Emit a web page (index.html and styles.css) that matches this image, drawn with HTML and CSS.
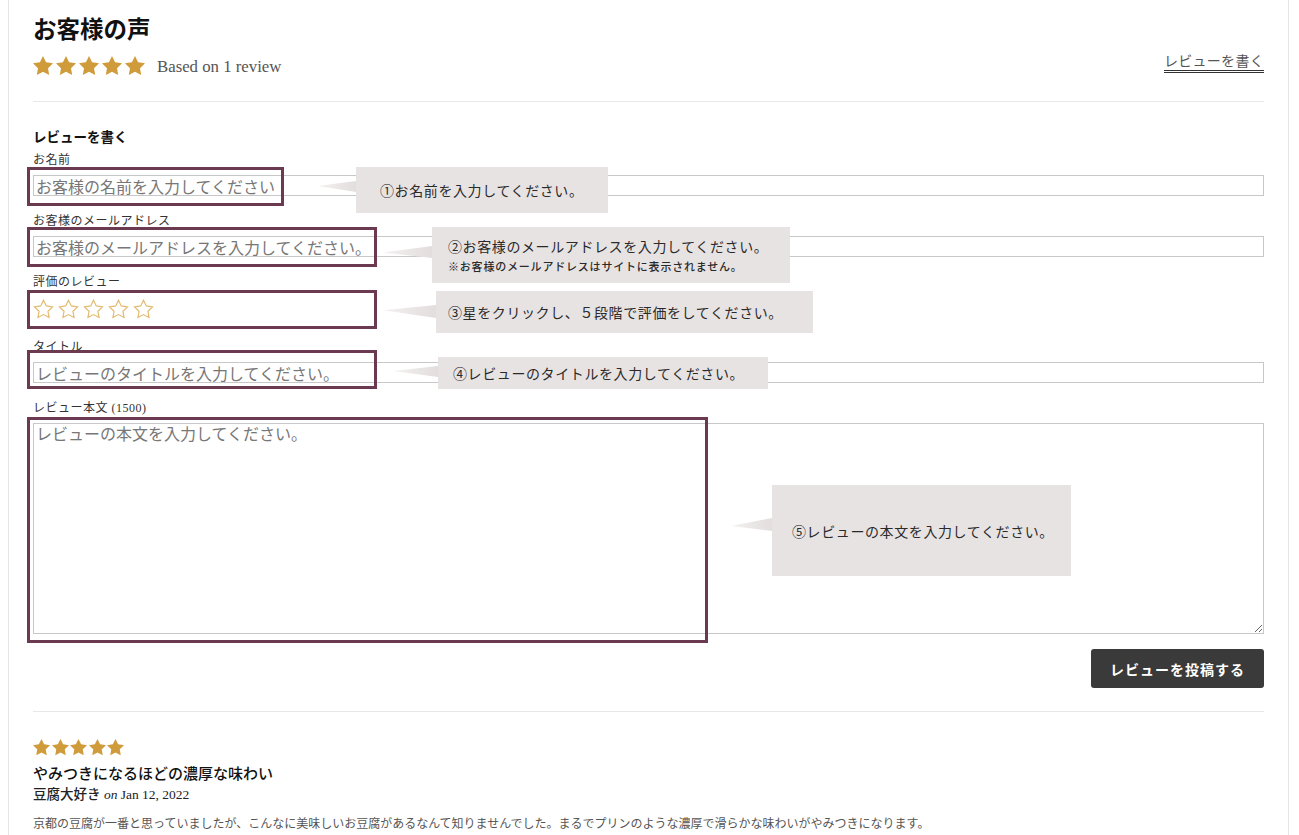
FILE: index.html
```html
<!DOCTYPE html>
<html lang="ja">
<head>
  <meta charset="utf-8">
  <title>お客様の声</title>
  <link rel="stylesheet" href="styles.css">
</head>
<body>
    <svg class="icon-defs" width="0" height="0">
        <defs>
            <symbol id="star" viewBox="2 2 20 20">
                <path d="M12 2l3.09 6.26L22 9.27l-5 4.87 1.18 6.88L12 17.77l-6.18 3.25L7 14.14 2 9.27l6.91-1.01L12 2z"/>
            </symbol>
            <symbol id="star-o" viewBox="1.4 1.4 21.2 21.2">
                <path d="M12 2.6l2.8 5.8 6.3.9-4.6 4.5 1.1 6.3L12 17.1l-5.6 3 1.1-6.3-4.6-4.5 6.3-.9L12 2.6z" fill="none" stroke="currentColor" stroke-width="1.2"/>
            </symbol>
        </defs>
    </svg>

    <div class="card">
        <h2 class="title">お客様の声</h2>
        <div class="summary">
            <div class="summary-left">
                <span class="stars stars-lg">
                    <svg><use href="#star"/></svg>
                    <svg><use href="#star"/></svg>
                    <svg><use href="#star"/></svg>
                    <svg><use href="#star"/></svg>
                    <svg><use href="#star"/></svg>
                </span>
                <span class="summary-text">Based on 1 review</span>
            </div>
            <a class="write-link" href="#">レビューを書く</a>
        </div>

        <hr class="divider">

        <form class="review-form">
            <h3 class="form-title">レビューを書く</h3>

            <div class="field">
                <label>お名前</label>
                <input type="text" placeholder="お客様の名前を入力してください">
                <div class="mark mark-1"></div>
                <div class="note note-1"><p>①お名前を入力してください。</p></div>
            </div>

            <div class="field">
                <label>お客様のメールアドレス</label>
                <input type="text" placeholder="お客様のメールアドレスを入力してください。">
                <div class="mark mark-2"></div>
                <div class="note note-2">
                    <p>②お客様のメールアドレスを入力してください。</p>
                    <p class="note-small">※お客様のメールアドレスはサイトに表示されません。</p>
                </div>
            </div>

            <div class="field">
                <label>評価のレビュー</label>
                <div class="stars stars-empty">
                    <svg><use href="#star-o"/></svg>
                    <svg><use href="#star-o"/></svg>
                    <svg><use href="#star-o"/></svg>
                    <svg><use href="#star-o"/></svg>
                    <svg><use href="#star-o"/></svg>
                </div>
                <div class="mark mark-3"></div>
                <div class="note note-3"><p>③星をクリックし、５段階で評価をしてください。</p></div>
            </div>

            <div class="field">
                <label>タイトル</label>
                <input type="text" placeholder="レビューのタイトルを入力してください。">
                <div class="mark mark-4"></div>
                <div class="note note-4"><p>④レビューのタイトルを入力してください。</p></div>
            </div>

            <div class="field field-last">
                <label>レビュー本文 (1500)</label>
                <textarea placeholder="レビューの本文を入力してください。"></textarea>
                <div class="mark mark-5"></div>
                <div class="note note-5"><p>⑤レビューの本文を入力してください。</p></div>
            </div>

            <div class="form-actions">
                <button type="button" class="submit">レビューを投稿する</button>
            </div>
        </form>

        <hr class="divider divider-bottom">

        <div class="review">
            <span class="stars stars-sm">
                <svg><use href="#star"/></svg>
                <svg><use href="#star"/></svg>
                <svg><use href="#star"/></svg>
                <svg><use href="#star"/></svg>
                <svg><use href="#star"/></svg>
            </span>
            <h4 class="review-title">やみつきになるほどの濃厚な味わい</h4>
            <p class="review-author">豆腐大好き <em>on</em> Jan 12, 2022</p>
            <p class="review-body">京都の豆腐が一番と思っていましたが、こんなに美味しいお豆腐があるなんて知りませんでした。まるでプリンのような濃厚で滑らかな味わいがやみつきになります。</p>
        </div>
    </div>
</body>
</html>
```

FILE: styles.css
```css
/* Page */
body {
    margin: 0;
    font-family: "Liberation Serif", "Noto Sans CJK JP", serif;
    color: #222;
    background-color: #fff;
}

.icon-defs {
    position: absolute;
    width: 0;
    height: 0;
}

.card {
    box-sizing: border-box;
    width: 1281px;
    margin-left: 8px;
    padding: 15px 24px 40px;
    border-left: 1px solid #e6e6e6;
    border-right: 1px solid #e6e6e6;
}

/* Header */
.title {
    margin: 0;
    font-size: 23.5px;
    line-height: 30px;
    font-weight: 700;
    color: #111;
}

.summary {
    display: flex;
    justify-content: space-between;
    align-items: flex-start;
    height: 24px;
    margin-top: 9px;
}

.summary-left {
    display: flex;
    align-items: center;
    height: 24px;
}

.summary-text {
    margin-left: 12px;
    padding-top: 2px;
    font-size: 16.8px;
    color: #555;
}

.write-link {
    margin-top: 0;
    font-size: 14px;
    line-height: 16px;
    color: #555;
    text-decoration: none;
    border-bottom: 3px double #333;
    letter-spacing: 0.3px;
}

/* Stars */
.stars {
    display: flex;
    align-items: center;
}

.stars svg {
    display: block;
    fill: currentColor;
}

.stars-lg {
    gap: 3px;
    color: #cf9b3b;
}

.stars-lg svg {
    width: 20px;
    height: 20px;
}

.stars-empty {
    gap: 4px;
    height: 25px;
    color: #e3bb70;
}

.stars-empty svg {
    width: 21px;
    height: 21px;
}

.stars-sm {
    gap: 1.6px;
    height: 18px;
    color: #cf9b3b;
}

.stars-sm svg {
    width: 17px;
    height: 17px;
}

.divider {
    margin: 23px 0 0;
    border: 0;
    border-top: 1px solid #e8e8e8;
}

.divider-bottom {
    margin-top: 23px;
}

/* Form */
.review-form {
    margin-top: 26px;
}

.form-title {
    margin: 0 0 4px;
    font-size: 13.5px;
    line-height: 20px;
    font-weight: 700;
    color: #111;
}

.field {
    position: relative;
    margin-bottom: 17px;
}

.field label {
    display: block;
    margin-bottom: 7px;
    font-size: 12px;
    line-height: 16px;
    letter-spacing: 0.5px;
    color: #333;
}

.field input,
.field textarea {
    display: block;
    box-sizing: border-box;
    width: 100%;
    margin: 0;
    padding: 0 2px;
    border: 1px solid #c8c8c8;
    border-radius: 0;
    font-family: "Noto Sans CJK JP", sans-serif;
    font-size: 16px;
    color: #333;
    background-color: #fff;
}

.field input {
    height: 21px;
    line-height: 19px;
}

.field textarea {
    height: 211px;
    padding-top: 0;
    line-height: 18px;
    resize: vertical;
}

.field input::placeholder,
.field textarea::placeholder {
    color: #777;
}

.field-last {
    margin-bottom: 15px;
}

.form-actions {
    display: flex;
    justify-content: flex-end;
}

.submit {
    width: 173px;
    height: 39px;
    padding: 0;
    border: none;
    border-radius: 3px;
    background-color: #3a3a3a;
    color: #fff;
    font-family: "Noto Sans CJK JP", sans-serif;
    font-size: 14px;
    font-weight: 700;
    letter-spacing: 1px;
    cursor: pointer;
}

/* Annotation frames */
.mark {
    position: absolute;
    left: -6px;
    box-sizing: border-box;
    border: 3px solid #6b3a50;
    pointer-events: none;
}

.mark-1 { top: 15px; width: 257px; height: 39px; }
.mark-2 { top: 14px; width: 350px; height: 40px; }
.mark-3 { top: 16px; width: 350px; height: 39px; }
.mark-4 { top: 11px; width: 350px; height: 39px; }
.mark-5 { top: 17px; width: 681px; height: 226px; }

/* Annotation callouts */
.note {
    position: absolute;
    box-sizing: border-box;
    display: flex;
    flex-direction: column;
    justify-content: center;
    background-color: #e8e3e3;
    font-family: "Noto Sans CJK JP", sans-serif;
    font-size: 14px;
    color: #2a2a2a;
    letter-spacing: 0.6px;
    white-space: nowrap;
}

.note p {
    margin: 0;
    line-height: 20px;
}

.note::before {
    content: "";
    position: absolute;
    background: linear-gradient(to right, #f4f1f1, #e3dddd);
}

.note-small {
    margin-top: 2px !important;
    font-size: 11px;
    line-height: 16px !important;
    font-weight: 500;
    letter-spacing: 0.8px;
}

.note-1 { left: 323px; top: 15px; width: 252px; height: 46px; padding-left: 24px; }
.note-1::before { left: -38px; top: 14px; width: 38px; height: 11px; clip-path: polygon(0 45%, 100% 0, 100% 100%); }

.note-2 { left: 399px; top: 14px; width: 358px; height: 56px; padding-left: 16px; }
.note-2::before { left: -49px; top: 19px; width: 49px; height: 12px; clip-path: polygon(0 55%, 100% 0, 100% 100%); }

.note-3 { left: 403px; top: 17px; width: 377px; height: 42px; padding-left: 12px; }
.note-3::before { left: -53px; top: 14px; width: 53px; height: 13px; clip-path: polygon(0 40%, 100% 0, 100% 100%); }

.note-4 { left: 405px; top: 18px; width: 330px; height: 32px; padding-left: 15px; }
.note-4::before { left: -45px; top: 9px; width: 45px; height: 11px; clip-path: polygon(0 45%, 100% 0, 100% 100%); }

.note-5 { left: 739px; top: 85px; width: 299px; height: 91px; padding-left: 20px; }
.note-5::before { left: -41px; top: 33px; width: 41px; height: 13px; clip-path: polygon(0 62%, 100% 0, 100% 100%); }

/* Review list */
.review {
    margin-top: 26px;
}

.review-title {
    margin: 8px 0 0;
    font-size: 15px;
    line-height: 20px;
    font-weight: 500;
    color: #111;
}

.review-author {
    margin: 2px 0 0;
    font-size: 13.5px;
    line-height: 18px;
    font-weight: 500;
    color: #222;
}

.review-author em {
    font-weight: 400;
}

.review-body {
    margin: 11px 0 0;
    font-size: 12px;
    line-height: 18px;
    color: #555;
}
```
